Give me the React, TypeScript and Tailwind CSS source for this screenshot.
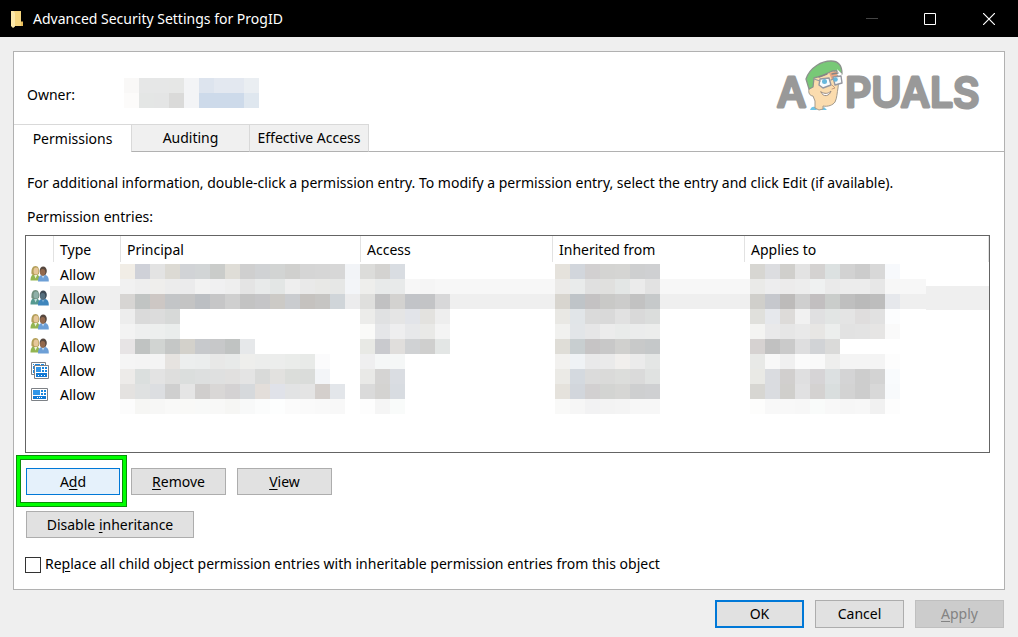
import type { ReactNode } from 'react';

const CELL = 15;

type Block = { start: number; rows: string[] };

const ownerBlocks: Block[] = [
  {
    start: 0,
    rows: [
      'f9f8f7 e6e7e7 e6e7e7 e6e7e6 f3f4f6 dde4ee e3e8f0 e3e8f0 eaeef2',
      'fcfbfa e4e6e5 e4e5e5 dadad9 f3f4f6 cddaea cddaea cddaea dfe7ef',
    ],
  },
];

const entryBlocks: Block[] = [
  {
    start: 0,
    rows: [
      'f1ede6 cfd1d8 e3e3e3 dcdad4 d1d3d6 d2d5d6 caccca dfddd7 cfcfcf d0d2d4 d2d4d3 d0d0ce d5d5d5 d6d6d6 d7d7d7 f2f4f7',
      'f1f1f1 eeeeee efeeec ececec ebebec f2f2f2 f0f0f1 eeeeee e4e4e4 e8eaea e3e6e5 eeeeee e9e9e9 e8e8e6 e6e7e6 f3f5f8',
      'd7d5d3 c1c4c3 cdc7c4 c3c5c7 c4c4c4 bcbfc3 c6c6c7 cfcfcf c3c3c3 c5c5c7 cccac6 cacccf c5c2bf c6c5c3 d0d5d9 ececed',
      'ededed dadada dcdcdc d7d9d8',
      'f3f3f3 eeefef edefee eaedec',
      'e7e4e5 c0c3c2 d1d4d2 c5c7c6 d3d1cb c7c9cc c7c8c9 c0c3c2 e6e8ea',
      'f5f5f5 f4f4f4 f4f4f4 e6e3e0 eceeee ebeded e8e8e7 e8eae9 eeeeec ecedec ecedec eaecea e8eae8 fbfbfc',
      'edebe9 dbdfde e3e3e3 dededd dbdedd dddfdf dfe0e0 e1e0df e4e4e4 d9dad9 e2e1df dbddda dadcda f3f5f8',
      'e4e2e0 dfe1e1 dcdee1 cfcfcf e5e5e5 d0cecd d9d7d6 d4d2d3 d6d9dc e3deda e0e2e9 e2e3e4 e4e4e4 d4cfcc e3e6ea',
      'fcfcfc f6f6f4 f7f7f6 f9f9f8 f9f9f7 f8f9f8 f8f8f7 f6f6f4 f8f9f9 fbfcfc fdfefe fbfbfb fafafa f9f9f9 f8f8f8',
    ],
  },
  {
    start: 16,
    rows: [
      'dcdcda d4d3d1 d9dde2',
      'eeeeec e8eaea e8eaea f7f7f7 f5f5f5 f7f7f7',
      'dfdfdd c1c1c2 d3d2d0 c2c4c8 c3c4c6 d8d8d9',
      'ececea e0e1e2 e5e5e5 e2e4e9 e3e2df eeeeee',
      'fafaf8 e5e6e8 eeeeef e7e8ea e9e9e7 f4f4f4',
      'e8e9e5 c9cace e0dedc d0d2d4 cfcfce e3e6e5',
      'efeff0 f5f7f7 f5f7f7',
      'e9e9e7 d5d4d3 dadde2',
      'dadada d4d3d1 d8dce1',
      'fdfdfd f5f5f5 f9fbfa',
    ],
  },
  {
    start: 29,
    rows: [
      'e5e2dc d2d6dc d2d0d1 d4d4d2 d5d5d3 cecfd0 cfd0d2',
      'ebeae8 e9ebeb e0e0e0 e0e0de e3e6e5 ebebeb e2e2e2',
      'd8d5cf bfc4c8 c4c2c3 c9c9c7 cccccb c2c2c2 c6c9ca',
      'e9e8e4 e1e5e8 dadada d9d9d9 e1e1e1 d9d9d9 dbdddc',
      'f1f1ef e2e5e8 e6e6e7 ececec e9ebea ebecec ecedec',
      'dfddd7 c8ced0 c6c4c5 c8c8c8 d0d0ce c8c9c9 c5c8c9',
      'f2f1ef eff2f5 e9e9ea eaeaea f1efed ebebeb e4e6e5',
      'ebeae6 d4d9df dbdbdb dadad9 dcdddb dadada e0e2e1',
      'e5e2dc d2d6dc d2d0d1 d3d4d2 d6d6d4 cecfd0 cfd0d2',
      'f9f9f8 f6f6f6 f2f2f3 f3f3f3 f4f4f4 f7f7f7 f7f7f7',
    ],
  },
  {
    start: 42,
    rows: [
      'd7d6d2 dcdde0 d0cfcc e3e3e3 d4d2d1 dce1e1 d2d2d2 cccccc d8d8d8 f7f9fc',
      'eaeae8 ededee ecebeb ededed eff1f1 eaeaea ececec ececec e7e7e7 f7f7f7',
      'd0cfcb c6c8cd bdbbba cfcfcf c2bfc0 cacdcb bfbfbf bababa bdbdbd e6e8ec',
      'e0e0dc e6e8ec dddbd9 f1f1f1 e0e0e1 e2e5e4 e4e4e4 dfdddd e1e1e1 fcfdfe',
      'f4f4f2 e9e9ea e6e6e6 e9e9e9 e7e6e4 eceeed e2e2e2 e3e3e3 e6e5e4 fafafa',
      'd6d2d1 c1c1c1 cacaca dededf d1d3d6 dadad9',
      'e8e9e7 f8f8f8 f0f0f0 fbfbfb f9f9f9 eeeeed f4f4f4 f4f4f4 f4f4f4 fdfdfd',
      'e9e9e5 dadce0 d1cfce dfdfe0 d6d4d6 dce0e1 d4d4d5 cdcdcd d3d3d3 f9fbfd',
      'd7d6d2 dadce0 d0cfcc e1e1e2 d4d2d1 d9dede d3d3d3 cdcdcd d8d8d8 f8fafc',
      'fdfdfc f8f8f8 f8f8f8 f7f7f7 f9fbfa f8f8f8 f6f6f6 f7f7f7 f1f1f1 fdfdfd',
    ],
  },
];

function Mosaic({ blocks }: { blocks: Block[] }) {
  return (
    <>
      {blocks.flatMap((block) =>
        block.rows.flatMap((row, r) =>
          row
            .split(' ')
            .map((color, c) => (
              <rect
                key={`${block.start}-${r}-${c}`}
                x={(block.start + c) * CELL}
                y={r * CELL}
                width={CELL}
                height={CELL}
                fill={`#${color}`}
              />
            )),
        ),
      )}
    </>
  );
}

function FolderIcon() {
  return (
    <svg className="h-[18px] w-[14px]" viewBox="0 0 14 18" aria-hidden="true">
      <path d="M1 1h10v11h2v4H1z" fill="#f3d27a" />
      <path d="M1 1h2.5l1.5 2v13.5L3 18l-2-2z" fill="#fde9a9" />
      <path d="M5 2h6v10l2 .5V16H5z" fill="#f6d67f" />
      <path d="M11 11.5h2V16h-2z" fill="#e8bd5b" />
    </svg>
  );
}

function UsersIcon({ selected = false }: { selected?: boolean }) {
  return (
    <svg className="h-4 w-[19px]" viewBox="0 0 19 16" aria-hidden="true">
      <path d="M.5 14.5c0-4 1.500-6.500 4.500-6.500s5 2.500 5 6.500z" fill={selected ? '#569a90' : '#93b551'} />
      <path d="M4 8.500l1.500 4L7.500 8.500z" fill={selected ? '#c5dcdc' : '#eef3e0'} />
      <path d="M1.500 8C1 3 2.500 0 5.500 0S9.500 3 9 8L7 9H3z" fill={selected ? '#72907f' : '#b39f59'} />
      <ellipse cx="6" cy="5" rx="2.500" ry="3.600" fill={selected ? '#8fb0a8' : '#e6c79a'} />
      <path d="M8 15.500c0-4.500 1.500-6.800 5.500-6.800s5.300 2.300 5.300 6.800z" fill={selected ? '#3f86bd' : '#6d9fd6'} />
      <path d="M11.500 9l1.500 3.500L14.800 9z" fill={selected ? '#7fb0d6' : '#c9dcf0'} />
      <ellipse cx="13.200" cy="5" rx="3.600" ry="4.600" fill={selected ? '#3d4a55' : '#57483f'} />
      <ellipse cx="12.700" cy="6.300" rx="2.600" ry="3.400" fill={selected ? '#56707f' : '#93694d'} />
    </svg>
  );
}

function PackageIcon({ stacked = false }: { stacked?: boolean }) {
  return (
    <svg className="h-[17px] w-[19px]" viewBox="0 0 19 17" aria-hidden="true">
      {stacked && (
        <>
          <path d="M1.500.500h14v12h-14z" fill="#fff" stroke="#7d8186" />
          <path d="M3 2h1v1H3zM3 4h1v3H3zM3 8h1v3H3zM5 2h5v1H5zM11 2h3v1h-3z" fill="#1b86de" />
        </>
      )}
      <g transform={stacked ? 'translate(4 3)' : 'translate(1 2)'}>
        <path d={stacked ? 'M.5.500h14v13H.500z' : 'M.5.500h16v12H.500z'} fill="#fff" stroke="#7d8186" />
        <path d={stacked ? 'M2 2h5v5H2z' : 'M2 2h7v5H2z'} fill="#2f95e8" />
        <path
          d={
            stacked
              ? 'M8 2h2v2H8zM11 2h2v2h-2zM8 5h2v2H8zM11 5h2v2h-2z'
              : 'M10 2h2v2h-2zM13 2h2v2h-2zM10 5h2v2h-2zM13 5h2v2h-2z'
          }
          fill="#1b86de"
        />
        <path d={stacked ? 'M2 8h11v4H2z' : 'M2 8h13v3H2z'} fill="#0f78d4" />
        <path d={stacked ? 'M4 10h1v1H4zM7 10h1v1H7zM10 10h1v1h-1z' : 'M6 9h1v1H6zM8 9h1v1H8zM10 9h1v1h-1z'} fill="#fff" />
      </g>
    </svg>
  );
}

function Logo() {
  return (
    <svg className="h-[64px] w-[214px]" viewBox="-4 0 214 64" role="img" aria-label="Appuals">
      <g
        fill="#999"
        stroke="#999"
        strokeWidth="3"
        strokeLinejoin="round"
        fontFamily="Inter, sans-serif"
        fontWeight="500"
        fontSize="41"
      >
        <text x="0" y="48">A</text>
        <text x="68" y="48">PUALS</text>
      </g>
      <g strokeLinejoin="round" strokeLinecap="round">
        <path d="M33 51c1-3 3-4 5-3l2 3zM44 51l3-3 3 3z" fill="#6fc4e6" />
        <path
          d="M34 29l-2 1c-1 4 1 7 4 7l2 5v7l4 2 4-1v-3c5 1 10-1 12-4 2-4 2-9 3-14l1-11-6-7-20 8z"
          fill="#fbdcae"
          stroke="#a39a8c"
        />
        <path d="M52 14l8-2v6l-5 3z" fill="#eaa683" />
        <path
          d="M29 20C33 8 45 2 54 2c7 0 11 4 11 13-4-4-8-4-12-2-5 3-10 5-16 6l-1 9-4 2-3-10z"
          fill="#78c977"
          stroke="#8b938b"
          strokeWidth="1.300"
        />
        <path d="M60 10l5 5-3 2z" fill="#fff" />
        <path d="M43 20l9-1 2 7-8 3-4-3zM56 18l8-1 1 7-7 2z" fill="#f8fbfd" stroke="#9698a0" strokeWidth="1.400" />
        <path d="M43 22l-6-2M54 21l2-1" fill="none" stroke="#9698a0" strokeWidth="1.300" />
        <circle cx="47.500" cy="22.500" r="2.500" fill="#68b8dc" />
        <circle cx="58.500" cy="20.500" r="2.300" fill="#68b8dc" />
        <path d="M42 18l8-3M55 15l6-1" fill="none" stroke="#858585" strokeWidth="1.400" />
        <path d="M44 33c4 2 7 2 10-1-1 5-8 7-10 1z" fill="#fff" stroke="#9b8b80" />
        <path d="M55 26l3 3-3 1" fill="none" stroke="#c89d7d" />
      </g>
    </svg>
  );
}

const entries: { icon: ReactNode; type: string; selected?: boolean }[] = [
  { icon: <UsersIcon />, type: 'Allow' },
  { icon: <UsersIcon selected />, type: 'Allow', selected: true },
  { icon: <UsersIcon />, type: 'Allow' },
  { icon: <UsersIcon />, type: 'Allow' },
  { icon: <PackageIcon stacked />, type: 'Allow' },
  { icon: <PackageIcon />, type: 'Allow' },
];

const columns = ['Type', 'Principal', 'Access', 'Inherited from', 'Applies to'];

function Key({ children }: { children: ReactNode }) {
  return <span className="underline underline-offset-2">{children}</span>;
}

function Button({ className, children, disabled }: { className: string; children: ReactNode; disabled?: boolean }) {
  return (
    <button type="button" disabled={disabled} className={`flex items-center justify-center ${className}`}>
      {children}
    </button>
  );
}

export default function App() {
  return (
    <div className="flex min-h-screen flex-col bg-[#efefef] font-['Noto_Sans',sans-serif] text-sm leading-5 text-black">
      <header className="flex h-[37px] items-center bg-black pl-2.5 text-white">
        <FolderIcon />
        <h1 className="ml-[9px] flex-1">Advanced Security Settings for ProgID</h1>
        <button type="button" aria-label="Minimize" disabled className="flex h-full w-[59px] items-center justify-center">
          <svg className="h-3 w-3" viewBox="0 0 12 12"><path d="M0 5.500h12" stroke="#444" /></svg>
        </button>
        <button type="button" aria-label="Maximize" className="flex h-full w-[58px] items-center justify-center">
          <svg className="h-3 w-3" viewBox="0 0 12 12"><path d="M.5.500h11v11H.500z" fill="none" stroke="#fff" /></svg>
        </button>
        <button type="button" aria-label="Close" className="flex h-full w-[59px] items-center justify-center">
          <svg className="h-3 w-3" viewBox="0 0 12 12"><path d="M0 0l12 12M12 0L0 12" stroke="#fff" strokeWidth="1.200" /></svg>
        </button>
      </header>

      <main className="mx-[13px] mt-3.5 border border-[#b1b1b1] bg-white pb-[15px]">
        <div className="flex h-[72px] justify-between pl-[13px] pr-[17px]">
          <div className="flex items-start">
            <span className="mt-[33px] w-[97px]">Owner:</span>
            <svg className="mt-[26px] h-[30px] w-[135px]" viewBox="0 0 135 30" shapeRendering="crispEdges" aria-hidden="true">
              <Mosaic blocks={ownerBlocks} />
            </svg>
          </div>
          <div className="mt-[7px]"><Logo /></div>
        </div>

        <div role="tablist" className="flex h-7">
          <button type="button" role="tab" aria-selected="true" className="w-[117px] border-t border-[#d9d9d9] bg-white">
            Permissions
          </button>
          <button type="button" role="tab" aria-selected="false" className="w-[119px] border border-[#d9d9d9] border-b-[#b1b1b1] bg-[#f0f0f0]">
            Auditing
          </button>
          <button type="button" role="tab" aria-selected="false" className="w-[119px] border border-l-0 border-[#d9d9d9] border-b-[#b1b1b1] bg-[#f0f0f0]">
            Effective Access
          </button>
          <div className="flex-1 border-b border-[#b1b1b1]" />
        </div>

        <div className="px-[11px]">
          <p className="mt-[21px] px-0.5">
            For additional information, double-click a permission entry. To modify a permission entry, select the entry and click Edit (if available).
          </p>
          <h2 id="entries-label" className="mt-3.5 px-0.5">Permission entries:</h2>

          <div className="relative mr-[3px] mt-2 h-[218px] overflow-hidden border border-[#646464]">
            <table aria-labelledby="entries-label" className="w-full table-fixed border-separate border-spacing-0 text-left">
              <colgroup>
                <col className="w-[28px]" />
                <col className="w-[67px]" />
                <col className="w-[240px]" />
                <col className="w-[192px]" />
                <col className="w-[192px]" />
                <col />
              </colgroup>
              <thead>
                <tr className="h-[26px]">
                  <th aria-label="Kind" className="border-r border-[#e2e2e2] p-0" />
                  {columns.map((name) => (
                    <th key={name} className="border-r border-[#e2e2e2] p-0 pl-1.5 pt-0.5 font-normal">{name}</th>
                  ))}
                </tr>
              </thead>
              <tbody>
                {entries.map((entry, i) => (
                  <tr key={i} className={entry.selected ? 'h-6 bg-[#efefef]' : 'h-6'}>
                    <td className="p-0">
                      <div className="flex h-6 w-6 items-center bg-white pl-1">{entry.icon}</div>
                    </td>
                    <td className="p-0 pl-1.5 pt-0.5">{entry.type}</td>
                    <td className="p-0" />
                    <td className="p-0" />
                    <td className="p-0" />
                    <td className="p-0" />
                  </tr>
                ))}
              </tbody>
            </table>
            <svg
              className="absolute left-[94px] top-7 h-[150px] w-[806px]"
              viewBox="0 0 806 150"
              shapeRendering="crispEdges"
              aria-hidden="true"
            >
              <path d="M0 0h806v150H0z" fill="#fff" />
              <path d="M0 15h806v15H0z" fill="#f7f7f7" />
              <path d="M0 30h806v15H0z" fill="#efefef" />
              <Mosaic blocks={entryBlocks} />
            </svg>
          </div>

          <div className="mt-[15px] flex gap-[11px] pl-px">
            <div className="relative">
              <Button className="h-[27px] w-[94px] border border-[#0078d7] bg-[#e5f1fb]">
                <span>A<Key>d</Key>d</span>
              </Button>
              <div className="pointer-events-none absolute -bottom-3 -left-2.5 -right-[7px] -top-[13px] border border-[#0b8f0b]">
                <div className="h-full border-[3px] border-[#00ff00]">
                  <div className="h-full border border-[#0b8f0b]" />
                </div>
              </div>
            </div>
            <Button className="h-[27px] w-[95px] border border-[#adadad] bg-[#e1e1e1]">
              <span><Key>R</Key>emove</span>
            </Button>
            <Button className="h-[27px] w-[95px] border border-[#adadad] bg-[#e1e1e1]">
              <span><Key>V</Key>iew</span>
            </Button>
          </div>
          <div className="mt-4 pl-px">
            <Button className="h-[27px] w-[168px] border border-[#adadad] bg-[#e1e1e1]">
              <span>Disable <Key>i</Key>nheritance</span>
            </Button>
          </div>
          <div className="mt-4 flex items-center">
            <input
              id="replace-entries"
              type="checkbox"
              className="mt-0.5 h-4 w-4 appearance-none border border-[#333] bg-white checked:bg-[#0078d7]"
            />
            <label htmlFor="replace-entries" className="pl-1">
              Re<Key>p</Key>lace all child object permission entries with inheritable permission entries from this object
            </label>
          </div>
        </div>
      </main>

      <footer className="flex justify-end gap-[11px] pb-[9px] pr-3.5 pt-2.5">
        <Button className="h-7 w-[89px] border-2 border-[#0078d7] bg-[#e1e1e1]">OK</Button>
        <Button className="h-7 w-[89px] border border-[#adadad] bg-[#e1e1e1]">Cancel</Button>
        <Button disabled className="h-7 w-[89px] border border-[#bfbfbf] bg-[#cccccc] text-[#838383]">
          <span><Key>A</Key>pply</span>
        </Button>
      </footer>
    </div>
  );
}
